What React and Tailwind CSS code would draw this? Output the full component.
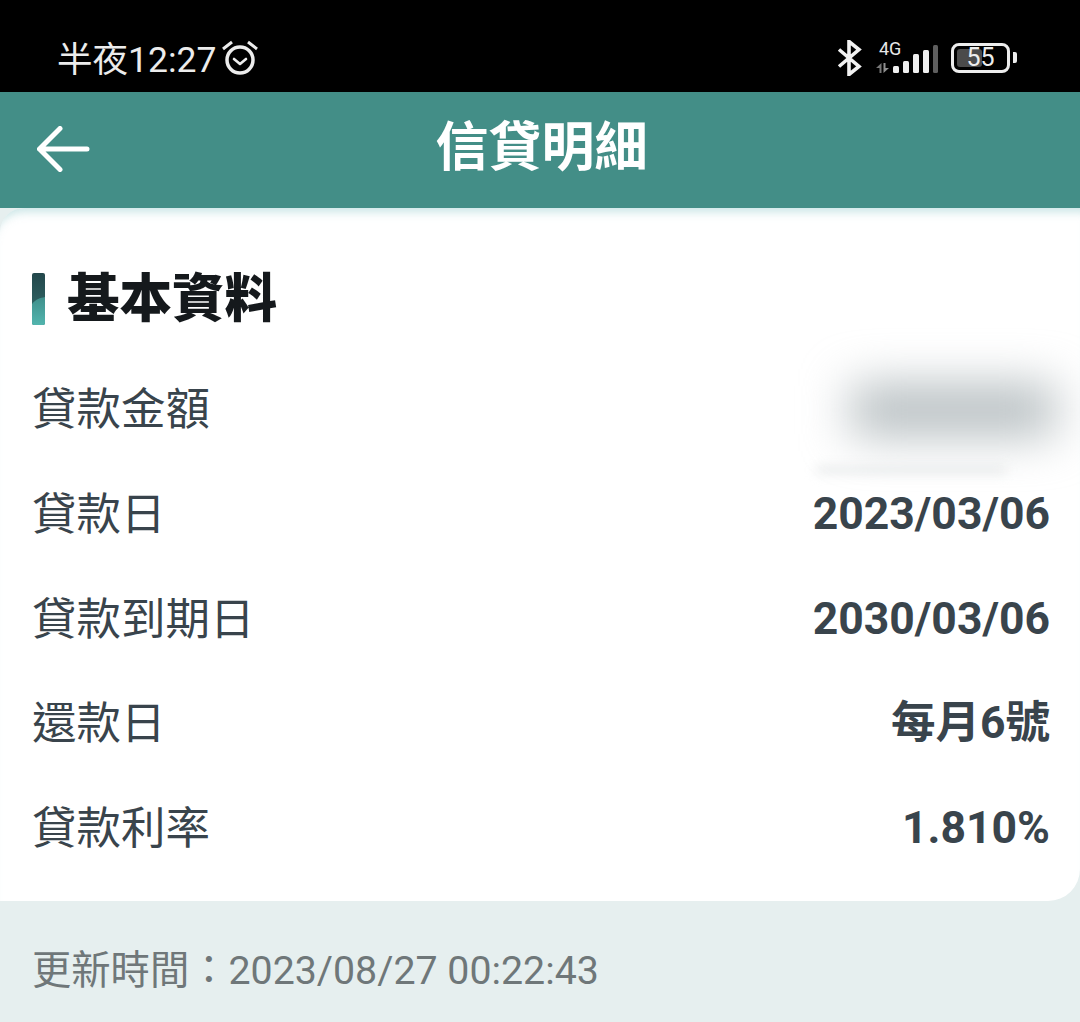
import React from "react";

const rows = [
  { label: "貸款金額", blurred: true },
  { label: "貸款日", value: "2023/03/06" },
  { label: "貸款到期日", value: "2030/03/06" },
  { label: "還款日", value: "每月6號" },
  { label: "貸款利率", value: "1.810%" },
];

const AlarmIcon = () => (
  <svg width="38" height="36" viewBox="0 0 38 36" fill="none" stroke="#ececec" strokeWidth="3">
    <circle cx="19" cy="20" r="13" strokeWidth="3.5" />
    <path d="M13 19l6 5 6-5" strokeWidth="2.6" strokeLinecap="round" strokeLinejoin="round" />
    <path d="M2 9l9-7M36 9l-9-7" strokeWidth="3" />
  </svg>
);

const BluetoothIcon = () => (
  <svg width="26" height="36" viewBox="0 0 26 36" fill="none" stroke="#f2f2f2" strokeWidth="3.6">
    <path d="M2 9.500l20 17L12 34.500V1.500l10 8-20 17" strokeLinejoin="miter" />
  </svg>
);

const SignalIcon = () => (
  <svg width="62" height="32" viewBox="0 0 62 32">
    <path d="M5.500 21v10H3.500v-5H0z" fill="#777" />
    <path d="M7.500 21v10l5.500-5H9.500v-5z" fill="#8f8f8f" />
    <rect x="17" y="24" width="6" height="7" rx="1.500" fill="#f0f0f0" />
    <rect x="27" y="19" width="6" height="12" rx="1.500" fill="#f0f0f0" />
    <rect x="37" y="12" width="6" height="19" rx="1.500" fill="#f0f0f0" />
    <rect x="47" y="8" width="6" height="23" rx="1.500" fill="#f0f0f0" />
    <rect x="57" y="3" width="5" height="28" rx="1.500" fill="#5e5e5e" />
  </svg>
);

const AccentBar = () => (
  <svg width="13" height="52" viewBox="0 0 13 52" className="rounded-[2px]">
    <defs>
      <linearGradient id="barTop" x1="0" y1="0" x2="0" y2="1">
        <stop offset="0" stopColor="#23474b" />
        <stop offset="1" stopColor="#35716f" />
      </linearGradient>
      <linearGradient id="barBottom" x1="0" y1="0" x2="0" y2="1">
        <stop offset="0" stopColor="#3f8f8b" />
        <stop offset="1" stopColor="#52b5ae" />
      </linearGradient>
    </defs>
    <rect width="13" height="52" fill="url(#barTop)" />
    <path d="M0 31C4 26 8 25 13 24V52H0z" fill="url(#barBottom)" />
  </svg>
);

const App = () => {
  return (
    <div className="w-[1080px] h-[1022px] overflow-hidden bg-[#e6efef] font-['Roboto','Noto_Sans_CJK_TC',sans-serif]">
      <div className="h-[92px] bg-black flex items-center pl-[57px] pr-[63px] pt-[29px] text-[#ececec]">
        <span className="text-[35.500px] leading-none">半夜12:27</span>
        <span className="ml-[5px] mb-[6px]">
          <AlarmIcon />
        </span>
        <div className="ml-auto flex items-center mb-[6px]">
          <BluetoothIcon />
          <div className="relative ml-[13px] w-[62px] h-[32px]">
            <SignalIcon />
            <span className="absolute left-[3px] top-[-2px] text-[18px] leading-none text-[#e8e8e8]">4G</span>
          </div>
          <div className="ml-[13px] w-[59px] h-[30px] rounded-[8px] border-[3px] border-[#ededed] p-[3px] relative">
            <div className="w-[54%] h-full rounded-[3px] bg-[#4b4b4b]" />
            <span className="absolute inset-0 flex items-center justify-center text-[25px] leading-none text-[#ededed]">55</span>
          </div>
          <div className="ml-[3px] w-[4px] h-[11px] rounded-r-[2px] bg-[#ededed]" />
        </div>
      </div>

      <div className="h-[116px] bg-[#438e87] flex items-center justify-center relative">
        <svg className="absolute left-[37px] top-[34px]" width="54" height="46" viewBox="0 0 54 46" fill="none" stroke="#fff" strokeWidth="5" strokeLinecap="round" strokeLinejoin="round">
          <path d="M23 2.500L2.500 23 23 43.500M2.500 23h47.500" />
        </svg>
        <h1 className="text-[53px] leading-none font-bold text-white pb-[4px] ml-[3px]">信貸明細</h1>
      </div>

      <div className="bg-[#438e87]">
        <div className="bg-[#e6efef]">
          <div className="bg-white rounded-tl-[24px] rounded-br-[32px] h-[693px] pl-[32px] pr-[30px] pt-[65px] shadow-[inset_0_12px_10px_-8px_rgba(180,218,220,0.7)]">
            <div className="flex items-center h-[52px] mb-[33px]">
              <AccentBar />
              <h2 className="ml-[22px] text-[52.500px] leading-none font-black text-[#15191c]">基本資料</h2>
            </div>
            {rows.map((row) => (
              <div key={row.label} className="h-[104.750px] flex items-center justify-between text-[#39444c]">
                <span className="text-[44.500px] leading-none">{row.label}</span>
                {row.blurred ? (
                  <div className="relative -mr-[6px]">
                    <div className="w-[205px] h-[50px] bg-[#b3bbbe] blur-[24px]" />
                    <div className="absolute right-[50px] top-[82px] w-[190px] h-[6px] bg-[#e2e5e6] blur-[6px]" />
                  </div>
                ) : (
                  <span className="text-[44.500px] leading-none font-bold pb-[2px]">{row.value}</span>
                )}
              </div>
            ))}
          </div>
          <div className="h-[121px] pl-[32px] pt-[51px] text-[39.300px] leading-none text-[#6f7779]">
            更新時間：2023/08/27 00:22:43
          </div>
        </div>
      </div>
    </div>
  );
};

export default App;
